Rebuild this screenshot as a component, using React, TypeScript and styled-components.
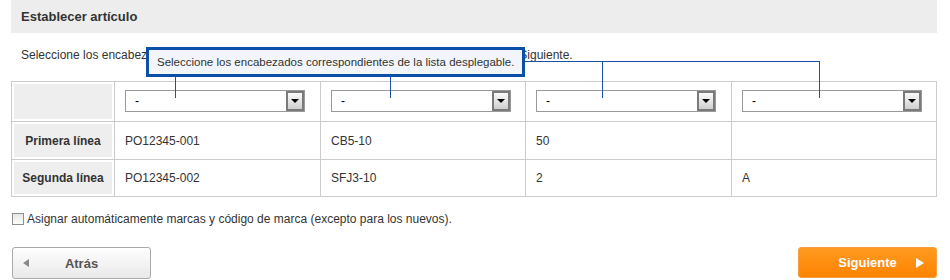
import styled, { createGlobalStyle } from "styled-components";

const GlobalStyle = createGlobalStyle`
  body {
    margin: 0;
    background: #fff;
    font-family: "Liberation Sans", Arial, sans-serif;
    font-size: 12px;
    color: #333;
  }
`;

const columns = ["-", "-", "-", "-"];
const rows = [
  { label: "Primera línea", cells: ["PO12345-001", "CB5-10", "50", ""], height: 38 },
  { label: "Segunda línea", cells: ["PO12345-002", "SFJ3-10", "2", "A"], height: 37 },
];

export default function App() {
  return (
    <>
      <GlobalStyle />
      <Page>
        <TitleBar>Establecer artículo</TitleBar>
        <Intro>
          Seleccione los encabezados correspondientes de la lista desplegable y después haga clic en Siguiente.
        </Intro>
        <Grid>
          <LabelCell $h={40} />
          {columns.map((c, i) => (
            <Cell key={i} $h={40}>
              <SelectBox>
                <span>{c}</span>
                <DropButton>
                  <Caret />
                </DropButton>
              </SelectBox>
            </Cell>
          ))}
          {rows.map((r) => (
            <>
              <LabelCell key={r.label} $h={r.height}>
                {r.label}
              </LabelCell>
              {r.cells.map((v, i) => (
                <Cell key={r.label + i} $h={r.height}>
                  {v}
                </Cell>
              ))}
            </>
          ))}
        </Grid>
        <CheckRow>
          <CheckBox type="checkbox" />
          Asignar automáticamente marcas y código de marca (excepto para los nuevos).
        </CheckRow>
        <Actions>
          <BackButton>
            <ArrowLeft />
            Atrás
          </BackButton>
          <NextButton>
            Siguiente
            <ArrowRight />
          </NextButton>
        </Actions>

        <Connectors width="925" height="110" viewBox="0 0 925 110">
          <g stroke="#1552a8" strokeWidth="1" fill="none" shapeRendering="crispEdges">
            <line x1="164.5" y1="76" x2="164.5" y2="98" />
            <line x1="379.5" y1="76" x2="379.5" y2="98" />
            <polyline points="514,61.5 808.5,61.5 808.5,98" />
            <line x1="591.5" y1="61.5" x2="591.5" y2="98" />
          </g>
        </Connectors>
        <Tip>Seleccione los encabezados correspondientes de la lista desplegable.</Tip>
      </Page>
    </>
  );
}

const Page = styled.div`
  position: relative;
  width: 926px;
  margin-left: 11px;
  display: flex;
  flex-direction: column;
`;

const TitleBar = styled.div`
  height: 33px;
  background: #ededed;
  padding-left: 10px;
  display: flex;
  align-items: center;
  font-size: 13px;
  font-weight: bold;
  color: #333;
`;

const Intro = styled.div`
  margin-top: 15px;
  padding-left: 10px;
  line-height: 14px;
`;

const Grid = styled.div`
  margin-top: 19px;
  display: grid;
  grid-template-columns: 103px 206px 205px 206px 205px;
  border-right: 1px solid #ccc;
  border-bottom: 1px solid #ccc;
`;

const Cell = styled.div<{ $h: number }>`
  height: ${(p) => p.$h - 1}px;
  border-left: 1px solid #ccc;
  border-top: 1px solid #ccc;
  padding-left: 10px;
  display: flex;
  align-items: center;
`;

const LabelCell = styled(Cell)`
  padding-left: 0;
  justify-content: center;
  background: #eee;
  box-shadow: inset 0 0 0 2px #fff;
  font-weight: bold;
`;

const SelectBox = styled.div`
  width: 180px;
  height: 22px;
  margin-top: -1px;
  box-sizing: border-box;
  border: 1px solid #999;
  background: #fff;
  display: flex;
  align-items: center;
  justify-content: space-between;
  padding-left: 9px;
  color: #000;
`;

const DropButton = styled.div`
  width: 18px;
  height: 20px;
  box-sizing: border-box;
  border: 2px solid #7a7a7a;
  background: linear-gradient(#fafafa, #cfcfcf);
  display: flex;
  align-items: center;
  justify-content: center;
`;

const Caret = styled.div`
  width: 0;
  height: 0;
  border-left: 4px solid transparent;
  border-right: 4px solid transparent;
  border-top: 4px solid #000;
`;

const CheckRow = styled.label`
  margin-top: 15px;
  margin-left: 1px;
  display: flex;
  align-items: center;
  gap: 3px;
  line-height: 14px;
`;

const CheckBox = styled.input`
  appearance: none;
  margin: 0;
  width: 12px;
  height: 12px;
  border: 1px solid #8f8f8f;
  box-sizing: border-box;
  background: linear-gradient(#e6e6e6, #fdfdfd);
`;

const Actions = styled.div`
  margin-top: 21px;
  display: flex;
  justify-content: space-between;
  padding-left: 1px;
`;

const BaseButton = styled.button`
  position: relative;
  width: 139px;
  height: 32px;
  box-sizing: border-box;
  border-radius: 3px;
  font-family: "Liberation Sans", Arial, sans-serif;
  font-size: 13px;
  font-weight: bold;
  display: flex;
  align-items: center;
  justify-content: center;
  padding: 0;
`;

const BackButton = styled(BaseButton)`
  border: 1px solid #aaa;
  background: linear-gradient(#fefefe, #e9e9e9);
  color: #555;
`;

const NextButton = styled(BaseButton)`
  height: 31px;
  border: 1px solid #f5a040;
  background: linear-gradient(#ff9a22, #ff8300);
  color: #fff;
`;

const ArrowLeft = styled.span`
  position: absolute;
  left: 10px;
  top: 11px;
  border-top: 4px solid transparent;
  border-bottom: 4px solid transparent;
  border-right: 6px solid #8a8a8a;
`;

const ArrowRight = styled.span`
  position: absolute;
  right: 12px;
  top: 10px;
  border-top: 5px solid transparent;
  border-bottom: 5px solid transparent;
  border-left: 8px solid #fff;
`;

const Connectors = styled.svg`
  position: absolute;
  left: 0;
  top: 0;
  pointer-events: none;
`;

const Tip = styled.div`
  position: absolute;
  left: 135px;
  top: 47px;
  width: 379px;
  height: 30px;
  box-sizing: border-box;
  border: 3px solid #0b4fa8;
  background: #f2f6fa;
  padding-left: 8px;
  display: flex;
  align-items: center;
  white-space: nowrap;
  font-size: 11.5px;
  color: #333;
`;
